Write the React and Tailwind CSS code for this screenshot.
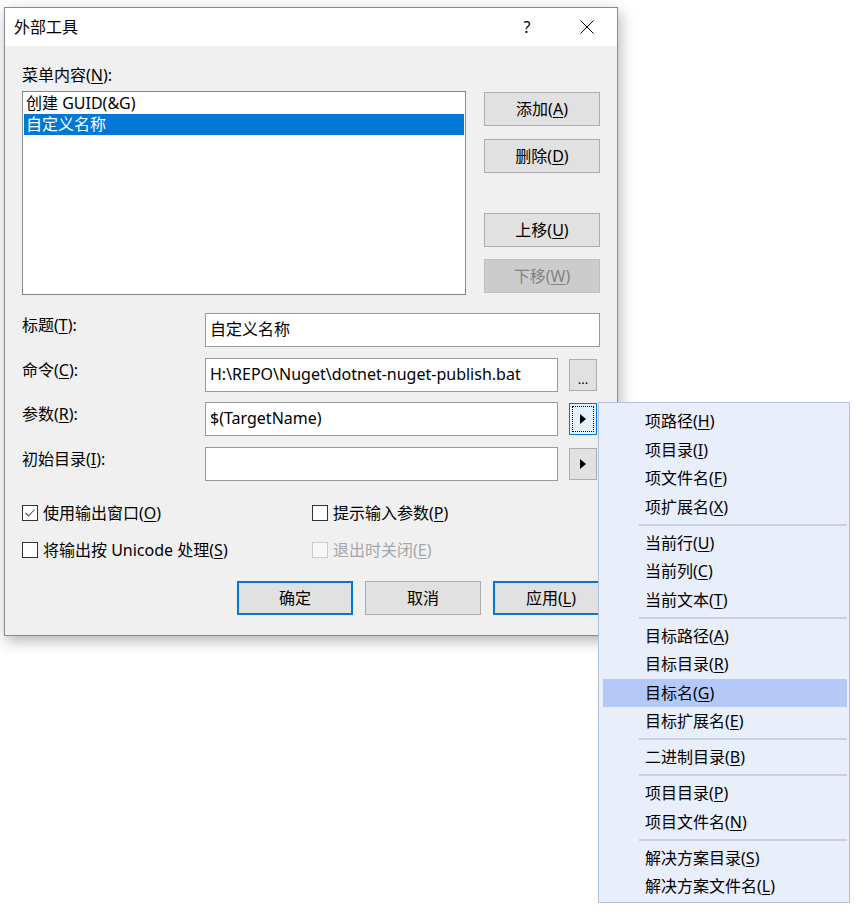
import React from 'react';

const menuItems = [
  ['项路径', 'H'], ['项目录', 'I'], ['项文件名', 'F'], ['项扩展名', 'X'], 'sep',
  ['当前行', 'U'], ['当前列', 'C'], ['当前文本', 'T'], 'sep',
  ['目标路径', 'A'], ['目标目录', 'R'], ['目标名', 'G', true], ['目标扩展名', 'E'], 'sep',
  ['二进制目录', 'B'], 'sep',
  ['项目目录', 'P'], ['项目文件名', 'N'], 'sep',
  ['解决方案目录', 'S'], ['解决方案文件名', 'L'],
];

// text with an underlined access key, e.g. 添加(A)
function Acc({ text, k, tail = '' }) {
  return (
    <>
      {text}(<span className="underline underline-offset-2">{k}</span>){tail}
    </>
  );
}

function Btn({ children, disabled, primary, className = '' }) {
  let look = 'border border-[#adadad] bg-[#e1e1e1]';
  if (disabled) look = 'border border-[#bfbfbf] bg-[#cccccc] text-[#838383]';
  if (primary) look = 'border-2 border-[#0078d7] bg-[#e1e1e1]';
  return (
    <div className={`h-[34px] w-[116px] shrink-0 flex items-center justify-center leading-[20px] ${look} ${className}`}>
      {children}
    </div>
  );
}

function Arrow() {
  return (
    <svg width="6" height="10" viewBox="0 0 6 10">
      <polygon points="0,0 6,5 0,10" fill="#000" />
    </svg>
  );
}

function Check({ checked, disabled, children }) {
  return (
    <div className="flex items-center h-[20px]">
      <div
        className={`w-[16px] h-[16px] shrink-0 border flex items-center justify-center ${
          disabled ? 'border-[#cccccc] bg-[#f7f7f7]' : 'border-[#333333] bg-white'
        }`}
      >
        {checked && (
          <svg width="14" height="14" viewBox="0 0 14 14">
            <path d="M2.5 7 L5.5 10 L11.5 3.5" fill="none" stroke="#555" strokeWidth="1.1" />
          </svg>
        )}
      </div>
      <span className={`ml-[5px] leading-[20px] whitespace-nowrap ${disabled ? 'text-[#a6a6a6]' : ''}`}>{children}</span>
    </div>
  );
}

function Field({ label, value, wide, button, className = '' }) {
  return (
    <div className={`flex ${className}`}>
      <div className="w-[183px] pt-[2px] leading-[20px]">{label}</div>
      <div
        className={`h-[34px] border border-[#9a9a9a] bg-white pl-[4px] pt-[5px] leading-[20px] whitespace-nowrap overflow-hidden ${
          wide ? 'w-[395px]' : 'w-[353px]'
        }`}
      >
        {value}
      </div>
      {button === 'dots' && (
        <div className="ml-[11px] mt-[1px] w-[28px] h-[32px] border border-[#adadad] bg-[#e1e1e1] flex items-end justify-center pb-[4px] text-[13px] leading-[14px]">
          ...
        </div>
      )}
      {button === 'focus' && (
        <div className="relative ml-[11px] mt-[1px] w-[28px] h-[32px] border border-[#0078d7] bg-[#e5f1fb] flex items-center justify-center">
          <div className="absolute inset-[2px] border border-dotted border-black" />
          <Arrow />
        </div>
      )}
      {button === 'arrow' && (
        <div className="ml-[11px] mt-[1px] w-[28px] h-[32px] border border-[#adadad] bg-[#e1e1e1] flex items-center justify-center">
          <Arrow />
        </div>
      )}
    </div>
  );
}

export default function App() {
  return (
    <div className="relative w-[860px] h-[919px] overflow-hidden bg-white pl-[4px] pt-[7px] text-[16px] text-black font-['Noto_Sans','Noto_Sans_CJK_SC',sans-serif]">
      {/* dialog */}
      <div className="w-[614px] h-[629px] border border-[#8a8a8a] bg-[#f0f0f0] shadow-[2px_5px_14px_rgba(0,0,0,0.3)]">
        <div className="h-[38px] bg-white flex items-center pl-[9px] pr-[7px]">
          <span className="leading-[20px]">外部工具</span>
          <div className="ml-auto flex gap-[14px] items-center">
            <div className="w-[46px] flex justify-center leading-[20px]">?</div>
            <div className="w-[46px] flex justify-center">
              <svg width="14" height="14" viewBox="0 0 14 14">
                <path d="M0.5 0.5 L13.5 13.5 M13.5 0.5 L0.5 13.5" stroke="#000" strokeWidth="1" />
              </svg>
            </div>
          </div>
        </div>

        <div className="pl-[17px] pr-[16px]">
          <div className="mt-[19px] leading-[20px]">
            <Acc text="菜单内容" k="N" tail=":" />
          </div>

          <div className="mt-[6px] flex">
            <div className="w-[444px] h-[204px] border border-[#828790] bg-white p-[1px]">
              <div className="h-[21px] leading-[21px] pl-[2px]">创建 GUID(&amp;G)</div>
              <div className="h-[21px] leading-[21px] pl-[2px] bg-[#0078d7] text-white">自定义名称</div>
            </div>
            <div className="ml-[18px] pt-[1px] flex flex-col">
              <Btn><Acc text="添加" k="A" /></Btn>
              <Btn className="mt-[13px]"><Acc text="删除" k="D" /></Btn>
              <Btn className="mt-[40px]"><Acc text="上移" k="U" /></Btn>
              <Btn disabled className="mt-[12px]"><Acc text="下移" k="W" /></Btn>
            </div>
          </div>

          <Field className="mt-[18px]" label={<Acc text="标题" k="T" tail=":" />} value="自定义名称" wide />
          <Field
            className="mt-[11px]"
            label={<Acc text="命令" k="C" tail=":" />}
            value="H:\REPO\Nuget\dotnet-nuget-publish.bat"
            button="dots"
          />
          <Field className="mt-[10px]" label={<Acc text="参数" k="R" tail=":" />} value="$(TargetName)" button="focus" />
          <Field className="mt-[11px]" label={<Acc text="初始目录" k="I" tail=":" />} value="" button="arrow" />

          <div className="mt-[22px] flex">
            <div className="w-[290px]">
              <Check checked><Acc text="使用输出窗口" k="O" /></Check>
            </div>
            <Check><Acc text="提示输入参数" k="P" /></Check>
          </div>
          <div className="mt-[17px] flex">
            <div className="w-[290px]">
              <Check><Acc text="将输出按 Unicode 处理" k="S" /></Check>
            </div>
            <Check disabled><Acc text="退出时关闭" k="E" /></Check>
          </div>

          <div className="mt-[21px] ml-[215px] flex gap-[12px]">
            <Btn primary>确定</Btn>
            <Btn>取消</Btn>
            <Btn primary><Acc text="应用" k="L" /></Btn>
          </div>
        </div>
      </div>

      {/* popup menu for the argument button */}
      <div className="absolute left-[598px] top-[402px] w-[252px] border border-[#b3bfdf] bg-[#e9eefb] pt-[4px] pb-[1px] pl-[4px] pr-[2px]">
        {menuItems.map((it, i) =>
          it === 'sep' ? (
            <div key={i} className="h-[7.5px] flex items-center pl-[36px]">
              <div className="h-[2px] w-full bg-[#c8d0e6]" />
            </div>
          ) : (
            <div
              key={i}
              className={`h-[28.5px] flex items-center pl-[42px] leading-[20px] ${it[2] ? 'bg-[#b5c9f8]' : ''}`}
            >
              <Acc text={it[0]} k={it[1]} />
            </div>
          )
        )}
      </div>
    </div>
  );
}
